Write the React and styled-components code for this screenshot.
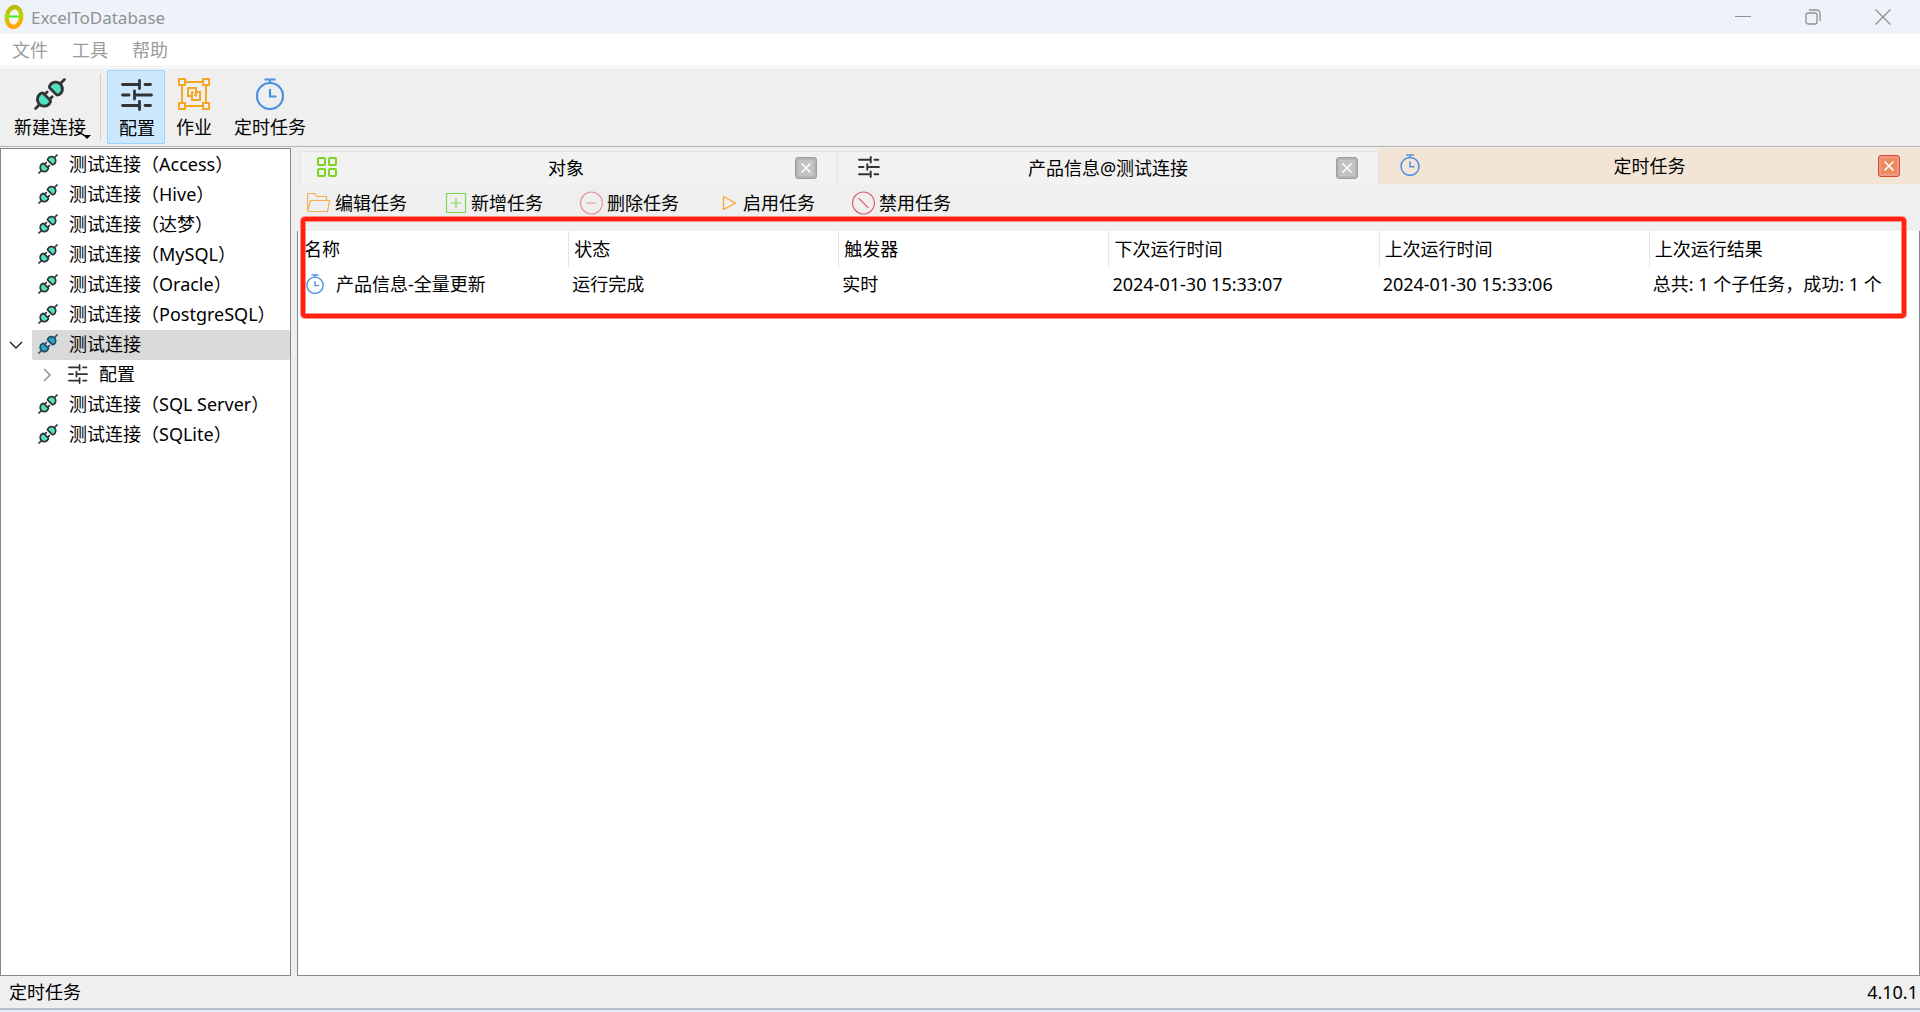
import React, {useState} from 'react';
import styled, {createGlobalStyle} from 'styled-components';


const GlobalStyle = createGlobalStyle`
  * {
    box-sizing: border-box;
  }
  body {
    margin: 0;
    background: #efefef;
    color: #000;
    font-family: "Noto Sans", "Noto Sans CJK SC", sans-serif;
    font-size: 18px;
    line-height: 24px;
  }
  button {
    margin: 0;
    padding: 0;
    border: none;
    background: none;
    color: inherit;
    font: inherit;
  }
  svg {
    display: block;
    flex: none;
  }
`

const Window = styled.div`
  display: flex;
  flex-direction: column;
  min-height: 100vh;
  border-bottom: 2px solid #e3ebf6;
`
const TitleBar = styled.header`
  display: flex;
  align-items: center;
  height: 34px;
  padding: 0 2px 0 4px;
  background: #eef3fa;
`
const AppName = styled.h1`
  flex: 1;
  margin: 0 0 0 7px;
  padding-top: 2px;
  color: #8f9193;
  font-size: 17px;
  font-weight: normal;
`
const WindowButton = styled.button`
  display: flex;
  align-items: center;
  justify-content: center;
  width: 70px;
  height: 34px;
`
const MenuBar = styled.nav`
  display: flex;
  gap: 24px;
  height: 33px;
  padding: 4px 12px 0;
  background: #fff;
  border-bottom: 1px solid #f0f0f0;
`
const MenuItem = styled.button`
  height: 24px;
  color: #9b9b9b;
`
const ToolBar = styled.div`
  display: flex;
  height: 80px;
  padding: 2px 3px;
  border-top: 1px solid #fff;
  border-bottom: 1px solid #b4b4b4;
`
const ToolButton = styled.button`
  position: relative;
  display: flex;
  flex-direction: column;
  align-items: center;
  gap: 5px;
  width: ${props => props.$wide ? '94px' : '58px'};
  height: 74px;
  padding-top: ${props => props.$active ? '8px' : '7px'};
  padding-left: ${props => props.$active ? '2px' : '0'};
  border: 1px solid ${props => props.$active ? '#99d1ff' : 'transparent'};
  border-radius: 2px;
  background: ${props => props.$active ? '#cce8ff' : 'transparent'};
`
const DropArrow = styled.span`
  position: absolute;
  right: 5px;
  bottom: 4px;
  border: 4px solid transparent;
  border-top-color: #000;
  border-bottom: none;
`
const ToolDivider = styled.div`
  width: 1px;
  height: 66px;
  margin: 4px 6px 0 3px;
  background: #cfcfcf;
`
const Main = styled.main`
  flex: 1;
  display: flex;
  gap: 6px;
  padding-top: 1px;
`
const Tree = styled.ul`
  width: 291px;
  margin: 0;
  padding: 1px 0 0;
  list-style: none;
  background: #fff;
  border: 1px solid #828790;
`
const TreeRow = styled.li`
  display: flex;
  height: 30px;
  padding-left: ${props => props.$child ? '30px' : '0'};
`
const Toggle = styled.span`
  display: flex;
  align-items: center;
  justify-content: center;
  width: 31px;
  padding-right: ${props => props.$child ? '0' : '2px'};
`
const TreeLabel = styled.button`
  flex: 1;
  display: flex;
  align-items: center;
  gap: 11px;
  padding: 0 0 2px 6px;
  text-align: left;
  background: ${props => props.$selected ? '#d9d9d9' : 'transparent'};
  border-radius: 2px;
`
const Pane = styled.section`
  position: relative;
  flex: 1;
  display: flex;
  flex-direction: column;
  min-width: 0;
`
const Tabs = styled.div`
  display: grid;
  grid-template-columns: repeat(3, 1fr);
  align-items: end;
  height: 36px;
`
const Tab = styled.div`
  display: flex;
  align-items: center;
  height: ${props => props.$active ? '36px' : '33px'};
  padding: 0 20px;
  background: ${props => props.$active ? '#f3e5d5' : '#f2f2f2'};
  border: solid #e4e4e4;
  border-width: ${props => props.$active ? '0' : '1px 1px 0 0'};
  &:first-child {
    margin-left: 3px;
    padding-left: 16px;
    border-left-width: 1px;
  }
  > svg {
    margin-bottom: 3px;
  }
`
const TabTitle = styled.button`
  flex: 1;
  height: 30px;
  padding-bottom: 1px;
`
const CloseButton = styled.button`
  display: flex;
  align-items: center;
  justify-content: center;
  width: 22px;
  height: 22px;
  border: 1px solid ${props => props.$active ? '#e0452f' : '#9c9c9c'};
  border-radius: 3px;
  background: ${props => props.$active ? '#ec8a62' : '#c3c3c3'};
  box-shadow: inset 0 0 0 2px ${props => props.$active ? '#f09a86' : '#b4b4b4'};
`
const TaskBar = styled.div`
  display: flex;
  gap: 36px;
  height: 47px;
  padding: 7px 10px 0;
`
const TaskButton = styled.button`
  display: flex;
  align-items: center;
  gap: 4px;
  height: 24px;
`
const TableArea = styled.div`
  flex: 1;
  background: #fff;
  border: 1px solid #828790;
  border-top: none;
`
const TaskTable = styled.table`
  width: 100%;
  border-collapse: separate;
  border-spacing: 0;
  table-layout: fixed;
`
const HeadCell = styled.th`
  height: 37px;
  padding: 0 5px 2px;
  border-left: 1px solid #e5e5e5;
  font-weight: normal;
  text-align: left;
  &:first-child {
    padding-left: 6px;
    border-left: none;
  }
`
const Cell = styled.td`
  height: 32px;
  padding: 0 4px;
  white-space: nowrap;
`
const TaskName = styled.span`
  display: flex;
  align-items: center;
  gap: 11px;
  padding-left: 3px;
`
const Highlight = styled.div`
  position: absolute;
  top: 69px;
  left: 4px;
  right: 14px;
  height: 101px;
  border: 4px solid #ff2012;
  border-radius: 4px;
  box-shadow: 0 0 0 1px #ff8f86, inset 0 0 0 1px #ff8f86;
  pointer-events: none;
`
const StatusBar = styled.footer`
  display: flex;
  justify-content: space-between;
  height: 34px;
  padding: 4px 2px 0 9px;
  border-bottom: 2px solid #b6c3ce;
`


const Logo = () => (
  <svg width="20" height="26" viewBox="0 0 20 26">
    <defs>
      <linearGradient id="ring" x1="0" y1="0" x2="0.2" y2="1">
        <stop offset="0" stopColor="#b9b80c" />
        <stop offset="0.5" stopColor="#b5d40b" />
        <stop offset="1" stopColor="#ffa500" />
      </linearGradient>
    </defs>
    <ellipse cx="10" cy="13" rx="7.2" ry="10" transform="rotate(8 10 13)" fill="#f1f5ee" stroke="url(#ring)" strokeWidth="4.4" />
    <path d="M5 12.5h10" stroke="#3df01c" strokeWidth="2" />
  </svg>
)

const Plug = ({size = 20, selected}) => {
  const line = selected ? '#284b6b' : '#333'
  const fill = selected ? '#27a9c4' : '#50e3c2'
  return (
    <svg width={size} height={size} viewBox="0 0 30 30" fill="none" stroke={line} strokeWidth="2.6" strokeLinecap="round" strokeLinejoin="round">
      <path d="M14.8 7.2A6.3 6.3 0 1 1 23.2 15.8Q22 16.4 21 15.6L14.6 9.2Q14 8.2 14.8 7.2Z" fill={fill} />
      <path d="M6.8 14.4A6.3 6.3 0 1 0 15.2 22.8Q16 21.8 15.2 20.8L8.8 14.4Q7.8 13.6 6.8 14.4Z" fill={fill} />
      <path d="M25.500 4.500L28.500 1.500M4.500 25.500L1.500 28.500M10 15.400L12.400 13M14.600 20L17 17.600" />
    </svg>
  )
}

const Sliders = ({size = 20}) => (
  <svg width={size} height={size} viewBox="0 0 32 32" fill="none" stroke="#333" strokeWidth="2.8" strokeLinecap="round">
    <path d="M1.5 5.5H18M18.500 1.500V9.500M24 5.500H29.500M1.500 16H8M13.500 12V20M13.500 16H30.500M1.500 26.500H18M18.500 22.500V30.500M24 26.500H29.500" />
  </svg>
)

// frame with corner handles, two overlapping squares merged in the middle
const Job = () => (
  <svg width="32" height="32" viewBox="0 0 32 32" fill="none" stroke="#f5a623" strokeWidth="2">
    <path d="M7 4H25M7 28H25M4 7V25M28 7V25" />
    <path d="M1 1H7V7H1ZM25 1H31V7H25ZM1 25H7V31H1ZM25 25H31V31H25Z" />
    <path d="M10 10H18V14H22V22H14V18H10ZM14 18V14.500H16M18 14V17.500H16" />
  </svg>
)

const Stopwatch = ({size = 22}) => (
  <svg width={size} height={size} viewBox="0 0 32 32" fill="none" stroke="#4a90e2" strokeWidth="2.2">
    <circle cx="16" cy="18" r="13" />
    <path d="M10.500 1.500H21.500M16 2V5M16 11V18.500H22.500" />
  </svg>
)

const Grid = () => (
  <svg width="20" height="20" viewBox="0 0 20 20" fill="none" stroke="#7ed321" strokeWidth="2">
    <rect x="1" y="1" width="7" height="7" rx="1" />
    <rect x="12" y="1" width="7" height="7" rx="1" />
    <rect x="1" y="12" width="7" height="7" rx="1" />
    <rect x="12" y="12" width="7" height="7" rx="1" />
  </svg>
)

const Cross = () => (
  <svg width="12" height="12" viewBox="0 0 12 12" stroke="#fff" strokeWidth="1.6">
    <path d="M1.500 1.500L10.500 10.500M10.500 1.500L1.500 10.500" />
  </svg>
)

const taskIcons = {
  edit: <path d="M.5 20.500V2.500H7.500L10 5.500H19.500V9.500M.5 20.500L3.500 9.500H22.500L20.500 20.500H1" stroke="#f5b04a" />,
  add: <path d="M3.500 2.500H22.500V21.500H3.500ZM13 7V17M8 12H18" stroke="#7ed957" />,
  remove: <path d="M23.500 12A11 11 0 1 1 1.500 12A11 11 0 1 1 23.500 12ZM7.500 12H17.500" stroke="#e8929c" />,
  start: <path d="M8.500 5.500L20.500 12L8.500 18.500Z" stroke="#f5a623" />,
  stop: <path d="M23.500 12A11 11 0 1 1 1.500 12A11 11 0 1 1 23.500 12ZM7.500 7L17.500 17" stroke="#e0667a" />,
}

const TaskIcon = ({name}) => (
  <svg width="24" height="24" viewBox="0 0 24 24" fill="none" strokeWidth="1.2">{taskIcons[name]}</svg>
)

const tabs = [
  {title: '对象', icon: <Grid />},
  {title: '产品信息@测试连接', icon: <Sliders size={22} />},
  {title: '定时任务', icon: <Stopwatch />},
]

const actions = [
  ['edit', '编辑任务'],
  ['add', '新增任务'],
  ['remove', '删除任务'],
  ['start', '启用任务'],
  ['stop', '禁用任务'],
]

const connections = [
  '测试连接（Access）',
  '测试连接（Hive）',
  '测试连接（达梦）',
  '测试连接（MySQL）',
  '测试连接（Oracle）',
  '测试连接（PostgreSQL）',
  '测试连接',
  '测试连接（SQL Server）',
  '测试连接（SQLite）',
]

const columns = ['名称', '状态', '触发器', '下次运行时间', '上次运行时间', '上次运行结果']

const tasks = [
  ['产品信息-全量更新', '运行完成', '实时', '2024-01-30 15:33:07', '2024-01-30 15:33:06', '总共: 1 个子任务，成功: 1 个'],
]


function App() {

  const [selected, setSelected] = useState('测试连接')
  const [activeTab, setActiveTab] = useState('定时任务')

  return (
    <Window>
      <GlobalStyle />
      <TitleBar>
        <Logo />
        <AppName>ExcelToDatabase</AppName>
        <WindowButton aria-label="最小化">
          <svg width="16" height="16" viewBox="0 0 16 16" stroke="#8f9193"><path d="M0 7.500H16" /></svg>
        </WindowButton>
        <WindowButton aria-label="还原">
          <svg width="16" height="16" viewBox="0 0 16 16" fill="none" stroke="#8f9193" strokeWidth="1.3">
            <rect x="1" y="4" width="11" height="11" rx="2" />
            <path d="M4 1H11.500A3.500 3.500 0 0 1 15 4.500V12" />
          </svg>
        </WindowButton>
        <WindowButton aria-label="关闭">
          <svg width="16" height="16" viewBox="0 0 16 16" stroke="#8f9193" strokeWidth="1.3"><path d="M.5 .5L15.500 15.500M15.500 .5L.5 15.500" /></svg>
        </WindowButton>
      </TitleBar>
      <MenuBar>
        <MenuItem>文件</MenuItem>
        <MenuItem>工具</MenuItem>
        <MenuItem>帮助</MenuItem>
      </MenuBar>
      <ToolBar>
        <ToolButton $wide><Plug size={32} />新建连接<DropArrow /></ToolButton>
        <ToolDivider />
        <ToolButton $active><Sliders size={32} />配置</ToolButton>
        <ToolButton><Job />作业</ToolButton>
        <ToolButton $wide><Stopwatch size={32} />定时任务</ToolButton>
      </ToolBar>
      <Main>
        <Tree>
          {connections.map(name => (
            <React.Fragment key={name}>
              <TreeRow>
                <Toggle>
                  {name === '测试连接' && (
                    <svg width="14" height="14" viewBox="0 0 14 14" fill="none" stroke="#222" strokeWidth="1.4"><path d="M1 4L7 10L13 4" /></svg>
                  )}
                </Toggle>
                <TreeLabel $selected={name === selected} onClick={() => setSelected(name)}>
                  <Plug selected={name === selected} />{name}
                </TreeLabel>
              </TreeRow>
              {name === '测试连接' && (
                <TreeRow $child>
                  <Toggle $child>
                    <svg width="14" height="14" viewBox="0 0 14 14" fill="none" stroke="#8a8a8a" strokeWidth="1.4"><path d="M4 1L10 7L4 13" /></svg>
                  </Toggle>
                  <TreeLabel $selected={selected === '配置'} onClick={() => setSelected('配置')}>
                    <Sliders />配置
                  </TreeLabel>
                </TreeRow>
              )}
            </React.Fragment>
          ))}
        </Tree>
        <Pane>
          <Tabs>
            {tabs.map(tab => (
              <Tab key={tab.title} $active={tab.title === activeTab}>
                {tab.icon}
                <TabTitle onClick={() => setActiveTab(tab.title)}>{tab.title}</TabTitle>
                <CloseButton $active={tab.title === activeTab} aria-label={'关闭' + tab.title}><Cross /></CloseButton>
              </Tab>
            ))}
          </Tabs>
          <TaskBar>
            {actions.map(([icon, label]) => (
              <TaskButton key={icon}><TaskIcon name={icon} />{label}</TaskButton>
            ))}
          </TaskBar>
          <TableArea>
            <TaskTable>
              <thead>
                <tr>{columns.map(c => <HeadCell key={c}>{c}</HeadCell>)}</tr>
              </thead>
              <tbody>
                {tasks.map(([name, ...rest]) => (
                  <tr key={name}>
                    <Cell><TaskName><Stopwatch size={20} />{name}</TaskName></Cell>
                    {rest.map((value, i) => <Cell key={i}>{value}</Cell>)}
                  </tr>
                ))}
              </tbody>
            </TaskTable>
          </TableArea>
          <Highlight />
        </Pane>
      </Main>
      <StatusBar>
        <span>定时任务</span>
        <span>4.10.1</span>
      </StatusBar>
    </Window>
  );
}

export default App;
